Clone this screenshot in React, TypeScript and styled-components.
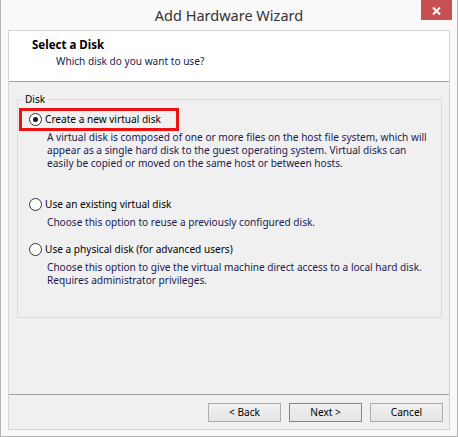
import styled, { createGlobalStyle } from "styled-components";

const GlobalStyle = createGlobalStyle`
  html, body {
    margin: 0;
    padding: 0;
    background: #f9f9f9;
  }
  body {
    font-family: "Noto Sans", "Open Sans", sans-serif;
  }
`;

type Choice = {
  id: string;
  label: string;
  lines: string[];
  after: number;
};

const choices: Choice[] = [
  {
    id: "new",
    label: "Create a new virtual disk",
    lines: [
      "A virtual disk is composed of one or more files on the host file system, which will",
      "appear as a single hard disk to the guest operating system. Virtual disks can",
      "easily be copied or moved on the same host or between hosts.",
    ],
    after: 23,
  },
  {
    id: "existing",
    label: "Use an existing virtual disk",
    lines: ["Choose this option to reuse a previously configured disk."],
    after: 9,
  },
  {
    id: "physical",
    label: "Use a physical disk (for advanced users)",
    lines: [
      "Choose this option to give the virtual machine direct access to a local hard disk.",
      "Requires administrator privileges.",
    ],
    after: 0,
  },
];

function Wizard() {
  return (
    <Window>
      <TitleBar>
        <Title>Add Hardware Wizard</Title>
        <CloseButton aria-label="Close">
          <svg width="9" height="8" viewBox="0 0 9 8">
            <path d="M1 0.5 L8 7.5 M8 0.5 L1 7.5" stroke="#fff" strokeWidth="2" />
          </svg>
        </CloseButton>
      </TitleBar>
      <Frame>
        <Header>
          <HeaderTitle>Select a Disk</HeaderTitle>
          <HeaderSubtitle>Which disk do you want to use?</HeaderSubtitle>
        </Header>
        <Body>
          <GroupBox>
            <Legend>Disk</Legend>
            {choices.map((c, i) => (
              <div key={c.id}>
                <Option $highlight={i === 0}>
                  <Radio type="radio" name="disk" defaultChecked={i === 0} />
                  <OptionLabel>{c.label}</OptionLabel>
                </Option>
                <Description $after={c.after}>
                  {c.lines.map((l) => (
                    <div key={l}>{l}</div>
                  ))}
                </Description>
              </div>
            ))}
          </GroupBox>
        </Body>
        <Footer>
          <Button>&lt; Back</Button>
          <Button $default>Next &gt;</Button>
          <Button>Cancel</Button>
        </Footer>
      </Frame>
    </Window>
  );
}

const Window = styled.div`
  box-sizing: border-box;
  width: 458px;
  height: 437px;
  border: 1px solid #b4b4b4;
  border-top: none;
  background: #f9f9f9;
  padding: 0 7px 6px;
  display: flex;
  flex-direction: column;
`;

const TitleBar = styled.div`
  height: 30px;
  margin: 0 -7px;
  display: grid;
  grid-template-columns: 1fr auto 1fr;
  align-items: start;
`;

const Title = styled.div`
  grid-column: 2;
  padding-top: 1px;
  font-size: 14.5px;
  line-height: 29px;
  color: #333;
`;

const CloseButton = styled.div`
  grid-column: 3;
  justify-self: end;
  margin-right: 5px;
  width: 31px;
  height: 20px;
  background: #c75050;
  display: flex;
  align-items: center;
  justify-content: center;
  padding-top: 2px;
  box-sizing: border-box;
`;

const Frame = styled.div`
  flex: 1;
  border: 1px solid #d4d4d4;
  background: #f0f0f0;
  display: flex;
  flex-direction: column;
`;

const Header = styled.div`
  height: 51px;
  box-sizing: border-box;
  padding: 6px 0 0 23px;
  background: #fff;
  border-bottom: 1px solid #a0a0a0;
`;

const HeaderTitle = styled.div`
  font-size: 11.5px;
  font-weight: bold;
  line-height: 16px;
  color: #000;
`;

const HeaderSubtitle = styled.div`
  padding-left: 24px;
  font-size: 10.1px;
  line-height: 17px;
  color: #1a1a50;
`;

const Body = styled.div`
  flex: 1;
  padding: 10px 7px 0 8px;
`;

const GroupBox = styled.fieldset`
  margin: 0;
  padding: 2px 0 30px;
  border: 1px solid #dcdcdc;
  min-width: 0;
`;

const Legend = styled.legend`
  margin-left: 5px;
  padding: 0 2px;
  font-size: 10.1px;
  line-height: 14px;
  color: #000;
`;

const Option = styled.label<{ $highlight?: boolean }>`
  display: flex;
  align-items: center;
  width: fit-content;
  height: 23px;
  box-sizing: border-box;
  margin-left: 1px;
  padding: 0 15px 0 7px;
  border: 3px solid ${(p) => (p.$highlight ? "#ee1111" : "transparent")};
`;

const Radio = styled.input`
  appearance: none;
  margin: 0 3px 0 0;
  width: 13px;
  height: 13px;
  border: 1px solid #333;
  border-radius: 50%;
  background: #fff;
  display: grid;
  place-content: center;
  box-sizing: border-box;
  &:checked::before {
    content: "";
    width: 5px;
    height: 5px;
    border-radius: 50%;
    background: #1a1a1a;
  }
`;

const OptionLabel = styled.span`
  font-size: 10.1px;
  line-height: 13px;
  color: #000;
`;

const Description = styled.div<{ $after: number }>`
  padding-left: 29px;
  margin-bottom: ${(p) => p.$after}px;
  font-size: 10.1px;
  line-height: 13px;
  color: #1a1a50;
  white-space: nowrap;
`;

const Footer = styled.div`
  height: 35px;
  box-sizing: border-box;
  border-top: 1px solid #a0a0a0;
  padding: 8px 6px 7px 0;
  display: flex;
  justify-content: flex-end;
  gap: 8px;
`;

const Button = styled.button<{ $default?: boolean }>`
  width: 73px;
  height: 19px;
  box-sizing: border-box;
  padding: 0;
  border: 1px solid ${(p) => (p.$default ? "#3399ff" : "#acacac")};
  background: linear-gradient(#f0f0f0, #e5e5e5);
  font-family: "Noto Sans", "Open Sans", sans-serif;
  font-size: 10.1px;
  line-height: 17px;
  color: #000;
`;

export default function App() {
  return (
    <>
      <GlobalStyle />
      <Wizard />
    </>
  );
}
